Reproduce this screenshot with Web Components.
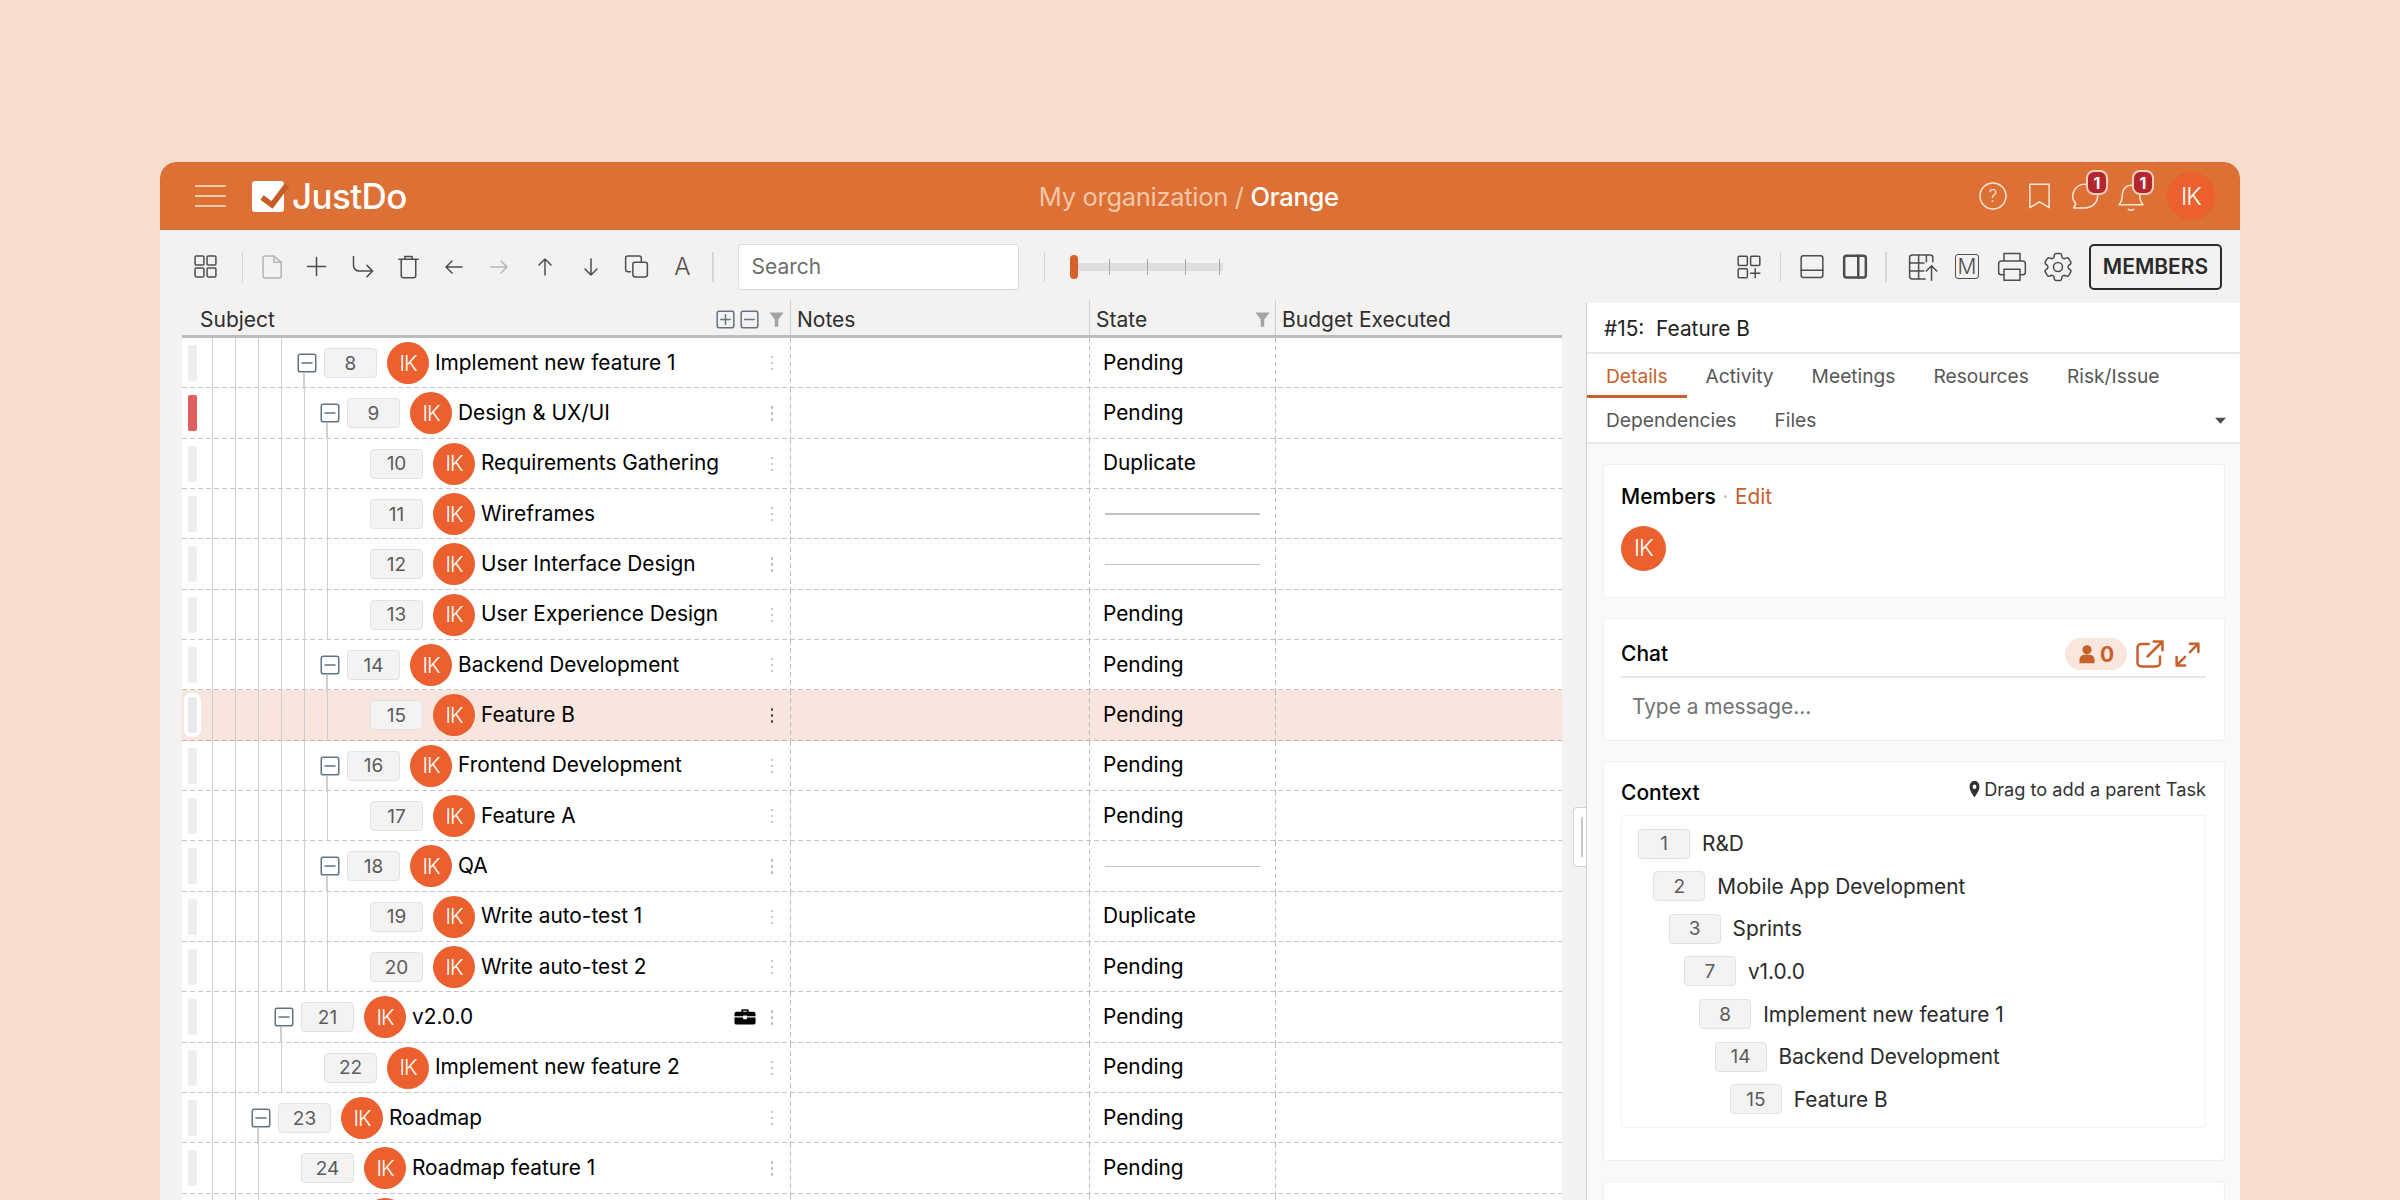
<!DOCTYPE html>
<html lang="en">
<head>
<meta charset="utf-8">
<title>JustDo</title>
<style>
  html, body { margin: 0; height: 100%; overflow: hidden; background: #f8dccd; }
  body { font-family: Inter, "Liberation Sans", sans-serif; }
</style>
</head>
<body>
<jd-window></jd-window>
<script>
/**
 * JustDo task board, built from small web components.
 */

// Icon paths, all of them on a 24x24 grid.
const ICONS = {
  grid: '<rect x="2" y="2" width="8.5" height="8.5" rx="1"/><rect x="13.5" y="2" width="8.5" height="8.5" rx="1"/><rect x="2" y="13.5" width="8.5" height="8.5" rx="1"/><rect x="13.5" y="13.5" width="8.5" height="8.5" rx="1"/>',
  gridPlus: '<rect x="2" y="2" width="8.5" height="8.5" rx="1"/><rect x="13.5" y="2" width="8.5" height="8.5" rx="1"/><rect x="2" y="13.5" width="8.5" height="8.5" rx="1"/><path d="M17.7 13.5v8.5M13.5 17.7H22"/>',
  doc: '<path d="M5 4a2 2 0 0 1 2-2h7l6 6v13a2 2 0 0 1-2 2H7a2 2 0 0 1-2-2z"/><path d="M14 2v6h6"/>',
  plus: '<path d="M12 4v16M4 12h16"/>',
  indent: '<path d="M4 3v8a5 5 0 0 0 5 5h12M16 11l5 5-5 5"/>',
  trash: '<path d="M9 5V3h6v2M4 5.5h16M6 6v14a2 2 0 0 0 2 2h8a2 2 0 0 0 2-2V6"/>',
  left: '<path d="M20 12H4M10 6l-6 6 6 6"/>',
  right: '<path d="M4 12h16M14 6l6 6-6 6"/>',
  up: '<path d="M12 20V4M6 10l6-6 6 6"/>',
  down: '<path d="M12 4v16M6 14l6 6 6-6"/>',
  copy: '<path d="M7 17H5a2 2 0 0 1-2-2V4a2 2 0 0 1 2-2h9a2 2 0 0 1 2 2v3"/><rect x="9" y="8" width="12" height="14" rx="2"/>',
  panelBottom: '<rect x="2" y="3" width="20" height="18" rx="2"/><path d="M2 15h20"/>',
  panelRight: '<rect x="2" y="3" width="20" height="18" rx="2"/><path d="M15 3v18"/>',
  tableUp: '<path d="M14 21H4a2 2 0 0 1-2-2V5a2 2 0 0 1 2-2h14a2 2 0 0 1 2 2v3M2 9h11M2 15h11M9 3v18M15 3v5M19 22V11M15 15l4-4 4 4"/>',
  print: '<path d="M6 8V2.500h12V8M6 18H4a2 2 0 0 1-2-2v-6a2 2 0 0 1 2-2h16a2 2 0 0 1 2 2v6a2 2 0 0 1-2 2h-2"/><rect x="6" y="14" width="12" height="8"/>',
  gear: '<path d="M9.594 3.94c.09-.542.56-.94 1.11-.94h2.593c.55 0 1.02.398 1.11.94l.213 1.281c.063.374.313.686.645.87.074.04.147.083.22.127.325.196.72.257 1.075.124l1.217-.456a1.125 1.125 0 0 1 1.37.49l1.296 2.247a1.125 1.125 0 0 1-.26 1.431l-1.003.827c-.293.241-.438.613-.43.992a7.723 7.723 0 0 1 0 .255c-.008.378.137.75.43.991l1.004.827c.424.35.534.955.26 1.43l-1.298 2.247a1.125 1.125 0 0 1-1.369.491l-1.217-.456c-.355-.133-.75-.072-1.076.124a6.47 6.47 0 0 1-.22.128c-.331.183-.581.495-.644.869l-.213 1.281c-.09.543-.56.94-1.11.94h-2.594c-.55 0-1.019-.398-1.11-.94l-.213-1.281c-.062-.374-.312-.686-.644-.87a6.52 6.52 0 0 1-.22-.127c-.325-.196-.72-.257-1.076-.124l-1.217.456a1.125 1.125 0 0 1-1.369-.49l-1.297-2.247a1.125 1.125 0 0 1 .26-1.431l1.004-.827c.292-.24.437-.613.43-.991a6.932 6.932 0 0 1 0-.255c.007-.38-.138-.751-.43-.992l-1.004-.827a1.125 1.125 0 0 1-.26-1.43l1.297-2.247a1.125 1.125 0 0 1 1.37-.491l1.216.456c.356.133.751.072 1.076-.124.072-.044.146-.086.22-.128.332-.183.582-.495.644-.869l.214-1.28Z"/><circle cx="12" cy="12" r="3"/>',
  bookmark: '<path d="M5 2h14v20l-7-5-7 5z"/>',
  chat: '<path d="M12 2.500a9.500 9.500 0 0 1 0 19H3.500l1.600-3.400A9.500 9.500 0 0 1 12 2.500z"/>',
  bell: '<path d="M3 18.500c2-2 2.500-4 2.500-8a6.500 6.500 0 0 1 13 0c0 4 .5 6 2.500 8zM10 22c1 1 3 1 4 0"/>',
  minusBox: '<rect x="1.500" y="1.500" width="21" height="21" rx="2.500"/><path d="M6 12h12"/>',
  plusBox: '<rect x="1.500" y="1.500" width="21" height="21" rx="2.500"/><path d="M6 12h12M12 6v12"/>',
  external: '<path d="M20 14v5a3 3 0 0 1-3 3H5a3 3 0 0 1-3-3V7a3 3 0 0 1 3-3h6M15 2h7v7M22 2 10 14"/>',
  expand: '<path d="M14 3h7v7M21 3l-7 7M10 21H3v-7M3 21l7-7"/>'
}

// Icons that are filled instead of stroked.
const FILLED = {
  funnel: '<path d="M2 3h20l-7.500 9v9h-5v-9z"/>',
  person: '<circle cx="12" cy="7" r="5.500"/><path d="M3 23v-4a6 6 0 0 1 6-6h6a6 6 0 0 1 6 6v4z"/>',
  pin: '<path fill-rule="evenodd" d="M12 1a8 8 0 0 0-8 8c0 5.500 8 14 8 14s8-8.500 8-14a8 8 0 0 0-8-8zm0 5a3 3 0 1 1 0 6 3 3 0 0 1 0-6z"/>',
  caret: '<path d="M2 6h20L12 19z"/>',
  briefcase: '<path fill-rule="evenodd" d="M8 5V3a1.500 1.500 0 0 1 1.500-1.500h5A1.500 1.500 0 0 1 16 3v2h5a2.500 2.500 0 0 1 2.500 2.500V11H14v-1h-4v1H.5V7.500A2.500 2.500 0 0 1 3 5zm2-1.500V5h4V3.500zM.5 12.500H10V15h4v-2.500h9.500v7A2.500 2.500 0 0 1 21 22H3a2.500 2.500 0 0 1-2.500-2.500z"/>'
}

customElements.define('jd-icon',
  /**
   * Inline svg icon, picked by its name attribute.
   */
  class extends HTMLElement {
    connectedCallback () {
      const name = this.getAttribute('name')
      const w = this.getAttribute('w') || 24
      const h = this.getAttribute('h') || w
      const stroke = this.getAttribute('stroke') || 1.5
      // Strokes keep their width at any size.
      const paint = FILLED[name]
        ? 'fill="currentColor"'
        : `fill="none" stroke="currentColor" stroke-width="${stroke}" stroke-linecap="round" stroke-linejoin="round"`
      const shadow = this.shadowRoot || this.attachShadow({ mode: 'open' })
      shadow.innerHTML = `
        <style>
          :host { display: inline-flex; flex: none; line-height: 0; }
          * { vector-effect: non-scaling-stroke; }
        </style>
        <svg width="${w}" height="${h}" viewBox="0 0 24 24" preserveAspectRatio="none" ${paint}>${FILLED[name] || ICONS[name]}</svg>`
    }
  }
)

customElements.define('jd-avatar',
  /**
   * Round avatar with the initials of a user.
   */
  class extends HTMLElement {
    constructor () {
      super()
      this.attachShadow({ mode: 'open' }).innerHTML = `
        <style>
          :host {
            --d: 42px;
            display: flex;
            flex: none;
            align-items: center;
            justify-content: center;
            width: var(--d);
            height: var(--d);
            border-radius: 50%;
            background: #ec5f2e;
            color: #fff;
            font-weight: 300;
            font-size: 21px;
            letter-spacing: -1px;
          }
        </style>
        IK`
    }
  }
)

customElements.define('jd-seq',
  /**
   * Grey box with the sequence number of a task.
   */
  class extends HTMLElement {
    constructor () {
      super()
      this.attachShadow({ mode: 'open' }).innerHTML = `
        <style>
          :host {
            display: flex;
            flex: none;
            align-items: center;
            justify-content: center;
            box-sizing: border-box;
            width: 53px;
            height: 30px;
            border: 1.500px solid #e2e2e2;
            border-radius: 4px;
            background: #f3f3f3;
            color: #5c5c5c;
            font-size: 19px;
          }
        </style>
        <slot></slot>`
    }
  }
)

const headerTemplate = document.createElement('template')
headerTemplate.innerHTML = `
<style>
  :host {
    display: flex;
    align-items: center;
    height: 68px;
    padding-left: 35px;
    padding-right: 25px;
    background: #dd7034;
    color: #fbe6d8;
    border-radius: 16px 16px 0 0;
  }
  .burger { display: flex; flex-direction: column; gap: 8.500px; width: 31px; }
  .burger i { display: block; height: 1.500px; background: #f7c8a9; }
  .logo { display: block; margin-left: 26px; overflow: visible; }
  .brand { margin-left: 8px; font-size: 35px; font-weight: 500; color: #fff; letter-spacing: -.6px; }
  .crumb { margin-left: 632px; font-size: 25.500px; color: #f5c7a9; white-space: nowrap; letter-spacing: -.3px; }
  .crumb b { font-weight: 500; color: #fff; }
  .right { display: flex; align-items: center; margin-left: auto; }
  .slot { position: relative; display: flex; align-items: center; justify-content: center; width: 46px; height: 46px; }
  .badge {
    position: absolute;
    top: -3px;
    left: 24px;
    display: flex;
    align-items: center;
    justify-content: center;
    box-sizing: border-box;
    width: 22px;
    height: 25px;
    border: 2px solid #f2cdb7;
    border-radius: 8px;
    background: #b3262e;
    color: #fff;
    font-size: 16px;
    font-weight: 700;
  }
  jd-avatar { --d: 48px; margin-left: 13px; font-size: 24px; }
  svg text { font-family: Inter, "Liberation Sans", sans-serif; }
</style>
<div class="burger"><i></i><i></i><i></i></div>
<svg class="logo" width="32" height="31" viewBox="0 0 32 31">
  <rect width="32" height="31" rx="3" fill="#fff"/>
  <path d="M10 16.500 20 24 35 4" fill="none" stroke="#c65c28" stroke-width="5.500"/>
</svg>
<span class="brand">JustDo</span>
<span class="crumb">My organization / <b>Orange</b></span>
<div class="right">
  <div class="slot">
    <svg width="28" height="28" viewBox="0 0 28 28" fill="none" stroke="currentColor" stroke-width="1.500">
      <circle cx="14" cy="14" r="13"/>
      <text x="14" y="20" font-size="17" font-weight="300" text-anchor="middle" fill="currentColor" stroke="none">?</text>
    </svg>
  </div>
  <div class="slot"><jd-icon name="bookmark" w="33" h="28"></jd-icon></div>
  <div class="slot"><jd-icon name="chat" w="32" h="30"></jd-icon><span class="badge">1</span></div>
  <div class="slot"><jd-icon name="bell" w="32" h="32"></jd-icon><span class="badge">1</span></div>
  <jd-avatar></jd-avatar>
</div>`

customElements.define('jd-header',
  /**
   * Orange top bar.
   */
  class extends HTMLElement {
    constructor () {
      super()
      this.attachShadow({ mode: 'open' }).appendChild(headerTemplate.content.cloneNode(true))
    }
  }
)

const toolbarTemplate = document.createElement('template')
toolbarTemplate.innerHTML = `
<style>
  :host {
    display: flex;
    align-items: center;
    box-sizing: border-box;
    height: 70px;
    padding-top: 3px;
    padding-left: 23px;
    padding-right: 18px;
    color: #4d4d4d;
  }
  .b { display: flex; flex: none; align-items: center; justify-content: center; width: 45.700px; height: 40px; }
  .off { color: #b5b5b5; }
  .sep { flex: none; width: 1.500px; height: 30px; background: #d6d6d6; }
  .letter { font-size: 24px; font-weight: 300; }
  .search {
    flex: none;
    display: flex;
    align-items: center;
    box-sizing: border-box;
    width: 281px;
    height: 46px;
    margin-left: 24px;
    padding-left: 13px;
    border: 1.500px solid #dcdcdc;
    border-radius: 4px;
    background: #fff;
    color: #6e6e6e;
    font-size: 21px;
  }
  .slider { position: relative; flex: none; width: 153px; height: 24px; margin-left: 25px; }
  .track { position: absolute; left: 0; right: 0; top: 8px; height: 8px; background: #dedede; }
  .tick { position: absolute; top: 4px; width: 1px; height: 16px; background: #a8a8a8; }
  .thumb { position: absolute; left: 0; top: 0; width: 8px; height: 24px; border-radius: 4px; background: #d8602a; }
  .right { display: flex; align-items: center; margin-left: auto; }
  .right .b { width: 43px; }
  .m {
    display: flex;
    align-items: center;
    justify-content: center;
    box-sizing: border-box;
    width: 24px;
    height: 25px;
    border: 1.500px solid #4d4d4d;
    border-radius: 3px;
    font-size: 21px;
    font-weight: 300;
  }
  .members {
    display: flex;
    align-items: center;
    justify-content: center;
    box-sizing: border-box;
    width: 133px;
    height: 46px;
    margin-left: 9.500px;
    border: 2px solid #2b2b2b;
    border-radius: 5px;
    color: #2b2b2b;
    font-size: 21px;
    font-weight: 600;
  }
</style>
<span class="b"><jd-icon name="grid" w="25"></jd-icon></span>
<span class="sep" style="margin-left:13px"></span>
<span class="b off" style="margin-left:5px"><jd-icon name="doc" w="29" h="25"></jd-icon></span>
<span class="b"><jd-icon name="plus" w="27"></jd-icon></span>
<span class="b"><jd-icon name="indent" w="27"></jd-icon></span>
<span class="b"><jd-icon name="trash" w="29" h="27"></jd-icon></span>
<span class="b"><jd-icon name="left" w="24"></jd-icon></span>
<span class="b off"><jd-icon name="right" w="24"></jd-icon></span>
<span class="b"><jd-icon name="up" w="24"></jd-icon></span>
<span class="b"><jd-icon name="down" w="24"></jd-icon></span>
<span class="b"><jd-icon name="copy" w="29" h="25"></jd-icon></span>
<span class="b letter">A</span>
<span class="sep" style="margin-left:7px"></span>
<div class="search">Search</div>
<span class="sep" style="margin-left:25px"></span>
<div class="slider">
  <div class="track"></div>
  <i class="tick" style="left:39px"></i>
  <i class="tick" style="left:77px"></i>
  <i class="tick" style="left:115px"></i>
  <i class="tick" style="left:149px"></i>
  <div class="thumb"></div>
</div>
<div class="right">
  <span class="b"><jd-icon name="gridPlus" w="26"></jd-icon></span>
  <span class="sep" style="margin-left:9px"></span>
  <span class="b" style="margin-left:9px"><jd-icon name="panelBottom" w="26" h="29"></jd-icon></span>
  <span class="b"><jd-icon name="panelRight" w="26" h="29" stroke="2.500"></jd-icon></span>
  <span class="sep" style="margin-left:9px"></span>
  <span class="b" style="margin-left:14px"><jd-icon name="tableUp" w="31" h="32"></jd-icon></span>
  <span class="b" style="margin-left:2px"><span class="m">M</span></span>
  <span class="b" style="margin-left:2px"><jd-icon name="print" w="32" h="33"></jd-icon></span>
  <span class="b" style="margin-left:3px"><jd-icon name="gear" w="36"></jd-icon></span>
  <span class="members">MEMBERS</span>
</div>`

customElements.define('jd-toolbar',
  /**
   * Grey toolbar under the top bar.
   */
  class extends HTMLElement {
    constructor () {
      super()
      this.attachShadow({ mode: 'open' }).appendChild(toolbarTemplate.content.cloneNode(true))
    }
  }
)

customElements.define('jd-row',
  /**
   * One task row of the grid.
   */
  class extends HTMLElement {
    constructor () {
      super()
      this.attachShadow({ mode: 'open' })
    }

    connectedCallback () {
      const level = Number(this.getAttribute('level'))
      const state = this.getAttribute('state')
      const toggle = this.hasAttribute('toggle')
      this.shadowRoot.innerHTML = `
        <style>
          :host {
            display: grid;
            grid-template-columns: 609px 299px 186px 286px;
            height: 50.330px;
            background:
              repeating-linear-gradient(to right, #c6c6c6 0 5px, transparent 5px 8px) left bottom / 100% 1px no-repeat,
              #fff;
            color: #000;
            font-size: 20.850px;
          }
          :host([selected]) {
            background:
              repeating-linear-gradient(to right, #c6b5ad 0 5px, transparent 5px 8px) left bottom / 100% 1px no-repeat,
              #f8e5dd;
          }
          .cell {
            display: flex;
            align-items: center;
            min-width: 0;
            background: repeating-linear-gradient(to bottom, #bdbdbd 0 5px, transparent 5px 8px) right top / 1px 100% no-repeat;
          }
          .cell:last-child { background: none; }
          .bar { flex: none; width: 9px; height: 36px; margin-left: 6px; border-radius: 2px; background: #eeeeee; }
          :host([red]) .bar { background: #df5f5f; }
          :host([selected]) .bar { background: #e9e8ec; box-shadow: 0 0 0 4px #fff; border-radius: 3px; }
          .guides {
            flex: none;
            align-self: stretch;
            width: ${101 + 23 * level}px;
            background: linear-gradient(to right, #cfcfcf 0 1.500px, transparent 1.500px) 15px 0 / 23px 100% repeat-x;
          }
          .toggle { position: relative; display: flex; align-items: center; justify-content: center; flex: none; width: 18px; height: 18px; margin-right: 8px; color: #5f7486; }
          .toggle.on::after {
            content: "";
            position: absolute;
            left: 5px;
            top: 19px;
            width: 1.500px;
            height: 16px;
            background: #cfcfcf;
          }
          jd-avatar { margin-left: 10px; margin-right: 6px; }
          .subject { flex: 1; white-space: nowrap; padding-bottom: 2px; }
          .case { margin-right: 10px; color: #000; }
          .dots { flex: none; width: 12px; margin-right: 13px; display: flex; flex-direction: column; align-items: center; gap: 3.500px; }
          .dots i { width: 2.500px; height: 2.500px; border-radius: 50%; background: #b5b5b5; }
          :host([selected]) .dots i { background: #444; }
          .state { padding-left: 13px; padding-bottom: 2px; }
          .none { flex: none; width: 155px; height: 1.500px; margin-left: 15px; background: #c2c2c2; }
        </style>
        <div class="cell">
          <span class="bar"></span>
          <span class="guides"></span>
          <span class="toggle ${toggle ? 'on' : ''}">${toggle ? '<jd-icon name="minusBox" w="20"></jd-icon>' : ''}</span>
          <jd-seq>${this.getAttribute('seq')}</jd-seq>
          <jd-avatar></jd-avatar>
          <span class="subject">${this.getAttribute('subject')}</span>
          ${this.hasAttribute('case') ? '<jd-icon class="case" name="briefcase" w="22" h="18"></jd-icon>' : ''}
          <span class="dots"><i></i><i></i><i></i></span>
        </div>
        <div class="cell"></div>
        <div class="cell">${state ? `<span class="state">${state}</span>` : '<span class="none"></span>'}</div>
        <div class="cell"></div>`
    }
  }
)

// Rows of the grid: [seq, subject, level, state, flags].
// The last row only just shows its avatar at the bottom of the picture.
const ROWS = [
  [8, 'Implement new feature 1', 0, 'Pending', 'toggle'],
  [9, 'Design &amp; UX/UI', 1, 'Pending', 'toggle red'],
  [10, 'Requirements Gathering', 2, 'Duplicate', ''],
  [11, 'Wireframes', 2, '', ''],
  [12, 'User Interface Design', 2, '', ''],
  [13, 'User Experience Design', 2, 'Pending', ''],
  [14, 'Backend Development', 1, 'Pending', 'toggle'],
  [15, 'Feature B', 2, 'Pending', 'selected'],
  [16, 'Frontend Development', 1, 'Pending', 'toggle'],
  [17, 'Feature A', 2, 'Pending', ''],
  [18, 'QA', 1, '', 'toggle'],
  [19, 'Write auto-test 1', 2, 'Duplicate', ''],
  [20, 'Write auto-test 2', 2, 'Pending', ''],
  [21, 'v2.0.0', -1, 'Pending', 'toggle case'],
  [22, 'Implement new feature 2', 0, 'Pending', ''],
  [23, 'Roadmap', -2, 'Pending', 'toggle'],
  [24, 'Roadmap feature 1', -1, 'Pending', ''],
  ['', '', -1, '', '']
]

const gridTemplate = document.createElement('template')
gridTemplate.innerHTML = `
<style>
  :host { display: block; flex: none; width: 1380px; }
  .head {
    display: grid;
    grid-template-columns: 609px 299px 186px 286px;
    box-sizing: border-box;
    height: 38px;
    border-bottom: 3px solid #bcbcbc;
    color: #2e2e2e;
    font-size: 21px;
  }
  .head div { display: flex; align-items: center; gap: 5px; box-sizing: border-box; padding-top: 3px; border-right: 1.500px solid #cfcfcf; padding-left: 6px; }
  .head div:last-child { border-right: 0; }
  .head .first { padding-left: 18px; padding-right: 5.500px; }
  .head span { margin-right: auto; }
  .head jd-icon { color: #5f7486; }
  .head .funnel { margin-left: 4px; color: #a3a3a3; }
</style>
<div class="head">
  <div class="first"><span>Subject</span><jd-icon name="plusBox" w="19"></jd-icon><jd-icon name="minusBox" w="19"></jd-icon><jd-icon class="funnel" name="funnel" w="17" h="19"></jd-icon></div>
  <div><span>Notes</span></div>
  <div style="padding-right:4px"><span>State</span><jd-icon class="funnel" name="funnel" w="17" h="19"></jd-icon></div>
  <div><span>Budget Executed</span></div>
</div>
<div id="rows"></div>`

customElements.define('jd-grid',
  /**
   * Task grid with its column heads and rows.
   */
  class extends HTMLElement {
    constructor () {
      super()
      this.attachShadow({ mode: 'open' }).appendChild(gridTemplate.content.cloneNode(true))
      const rows = this.shadowRoot.querySelector('#rows')
      for (const [seq, subject, level, state, flags] of ROWS) {
        const row = document.createElement('jd-row')
        row.setAttribute('seq', seq)
        row.setAttribute('subject', subject)
        row.setAttribute('level', level)
        row.setAttribute('state', state)
        flags.split(' ').filter(Boolean).forEach(flag => row.setAttribute(flag, ''))
        rows.appendChild(row)
      }
    }
  }
)

customElements.define('jd-card',
  /**
   * White card of the side panel.
   */
  class extends HTMLElement {
    constructor () {
      super()
      this.attachShadow({ mode: 'open' }).innerHTML = `
        <style>
          :host {
            display: block;
            box-sizing: border-box;
            padding: 0 17.500px;
            border: 1.500px solid #efefef;
            border-radius: 4px;
            background: #fff;
          }
        </style>
        <slot></slot>`
    }
  }
)

const panelTemplate = document.createElement('template')
panelTemplate.innerHTML = `
<style>
  :host {
    display: flex;
    flex-direction: column;
    flex: 1;
    min-width: 0;
    margin-top: 3px;
    border-left: 1.500px solid #cfcfcf;
    background: #f9f9f9;
    color: #000;
    font-size: 20.850px;
  }
  .title {
    display: flex;
    align-items: center;
    box-sizing: border-box;
    height: 51px;
    padding-left: 17px;
    padding-top: 2px;
    border-bottom: 2px solid #e6e6e6;
    background: #fff;
    color: #222;
    white-space: pre;
  }
  .tabs { box-sizing: border-box; height: 90px; border-bottom: 2px solid #e6e6e6; background: #fff; color: #575757; font-size: 19.200px; }
  .line { display: flex; align-items: center; height: 44px; }
  .tab { box-sizing: border-box; height: 44px; line-height: 45px; padding: 0 19px; }
  .tab.on { border-bottom: 3.500px solid #c8602c; color: #c8602c; }
  .line jd-icon { margin-left: auto; margin-right: 13px; color: #4d4d4d; }
  .cards { display: flex; flex-direction: column; gap: 20px; padding: 20px 15.500px 0; }
  h3 { margin: 0; font-size: 21px; font-weight: 500; }
  .row { display: flex; align-items: center; }
  .edit { color: #c8602c; }
  .dot { width: 3px; height: 3px; margin: 0 8px; border-radius: 50%; background: #c4c4c4; }
  jd-avatar { --d: 45px; font-size: 23px; }
  .pill {
    display: flex;
    align-items: center;
    justify-content: center;
    gap: 3px;
    box-sizing: border-box;
    width: 62px;
    height: 32px;
    margin-left: auto;
    border-radius: 16px;
    background: #f9e6dc;
    color: #c8602c;
    font-size: 21px;
    font-weight: 700;
  }
  .link { display: flex; color: #c8602c; }
  .chat-head { height: 32px; padding-top: 19px; padding-bottom: 6px; border-bottom: 2px solid #e6e6e6; align-items: flex-start; }
  .chat-head h3 { line-height: 32px; }
  .typing { display: flex; align-items: center; height: 56px; padding-left: 11px; color: #737373; }
  .drag { display: flex; align-items: center; gap: 2px; margin-left: auto; margin-bottom: 8px; color: #333; font-size: 18.200px; }
  .tree {
    display: flex;
    flex-direction: column;
    gap: 12.670px;
    margin-top: 9px;
    padding: 13px 16px;
    border: 1.500px solid #f4f4f4;
    border-radius: 3px;
    color: #2b2b2b;
  }
  .tree .row { gap: 12px; }
  jd-seq { width: 52px; }
</style>
<div class="title">#15:  Feature B</div>
<div class="tabs">
  <div class="line">
    <span class="tab on">Details</span>
    <span class="tab">Activity</span>
    <span class="tab">Meetings</span>
    <span class="tab">Resources</span>
    <span class="tab">Risk/Issue</span>
  </div>
  <div class="line">
    <span class="tab">Dependencies</span>
    <span class="tab">Files</span>
    <jd-icon name="caret" w="13" h="11"></jd-icon>
  </div>
</div>
<div class="cards">
  <jd-card style="height:134px">
    <div class="row" style="padding-top:18.500px"><h3>Members</h3><span class="dot"></span><span class="edit">Edit</span></div>
    <jd-avatar style="margin-top:17px"></jd-avatar>
  </jd-card>
  <jd-card style="height:123px">
    <div class="row chat-head">
      <h3>Chat</h3>
      <span class="pill"><jd-icon name="person" w="20" h="20"></jd-icon>0</span>
      <span class="link" style="margin-left:8px;margin-top:1px"><jd-icon name="external" w="30" stroke="2.500"></jd-icon></span>
      <span class="link" style="margin-left:8.500px;margin-right:4px;margin-top:2px"><jd-icon name="expand" w="29" stroke="2.500"></jd-icon></span>
    </div>
    <div class="typing">Type a message...</div>
  </jd-card>
  <jd-card style="height:400px">
    <div class="row" style="padding-top:17.500px;height:26px"><h3>Context</h3><span class="drag"><jd-icon name="pin" w="15" h="18"></jd-icon>Drag to add a parent Task</span></div>
    <div class="tree" id="tree"></div>
  </jd-card>
  <jd-card style="height:200px"></jd-card>
</div>`

// Parents of the selected task.
const CONTEXT = [
  [1, 'R&amp;D'],
  [2, 'Mobile App Development'],
  [3, 'Sprints'],
  [7, 'v1.0.0'],
  [8, 'Implement new feature 1'],
  [14, 'Backend Development'],
  [15, 'Feature B']
]

customElements.define('jd-panel',
  /**
   * Side panel with the details of the selected task.
   */
  class extends HTMLElement {
    constructor () {
      super()
      this.attachShadow({ mode: 'open' }).appendChild(panelTemplate.content.cloneNode(true))
      this.shadowRoot.querySelector('#tree').innerHTML = CONTEXT.map(([seq, name], i) =>
        `<div class="row" style="padding-left:${i * 15.3}px"><jd-seq>${seq}</jd-seq><span>${name}</span></div>`
      ).join('')
    }
  }
)

const windowTemplate = document.createElement('template')
windowTemplate.innerHTML = `
<style>
  :host {
    display: block;
    box-sizing: border-box;
    width: 2080px;
    height: 1038px;
    margin: 162px 0 0 160px;
    overflow: hidden;
    border-radius: 16px 16px 0 0;
    background: #f3f2f1;
  }
  main { position: relative; display: flex; gap: 24px; padding-left: 22px; }
  .grip {
    position: absolute;
    left: 1413px;
    top: 507px;
    box-sizing: border-box;
    width: 13px;
    height: 60px;
    border: 1.500px solid #d4d4d4;
    border-right: 0;
    border-radius: 4px 0 0 4px;
    background: #fff;
  }
  .grip::after { content: ""; display: block; width: 2px; height: 40px; margin: 9px 0 0 7px; background: #c9c9c9; }
</style>
<jd-header></jd-header>
<jd-toolbar></jd-toolbar>
<main>
  <jd-grid></jd-grid>
  <jd-panel></jd-panel>
  <div class="grip"></div>
</main>`

customElements.define('jd-window',
  /**
   * The application window on the peach background.
   */
  class extends HTMLElement {
    constructor () {
      super()
      this.attachShadow({ mode: 'open' }).appendChild(windowTemplate.content.cloneNode(true))
    }
  }
)
</script>
</body>
</html>
